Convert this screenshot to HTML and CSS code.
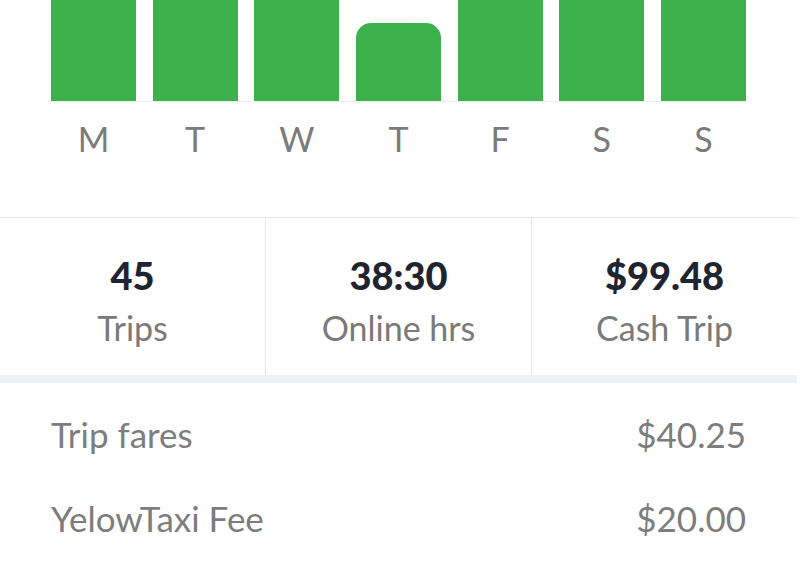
FILE: index.html
```html
<!DOCTYPE html>
<html lang="en">
<head>
  <meta charset="UTF-8" />
  <meta name="viewport" content="width=device-width, initial-scale=1.0"/>
  <title>Weekly Earnings</title>
  <link rel="stylesheet" href="styles.css">
</head>
<body>
  <div class="screen">
    <div class="chart">
      <div class="bars">
        <div class="bar"></div>
        <div class="bar"></div>
        <div class="bar"></div>
        <div class="bar short"></div>
        <div class="bar"></div>
        <div class="bar"></div>
        <div class="bar"></div>
      </div>
      <div class="days">
        <span>M</span>
        <span>T</span>
        <span>W</span>
        <span>T</span>
        <span>F</span>
        <span>S</span>
        <span>S</span>
      </div>
    </div>

    <div class="stats">
      <div class="stat">
        <div class="value">45</div>
        <div class="label">Trips</div>
      </div>
      <div class="stat">
        <div class="value">38:30</div>
        <div class="label">Online hrs</div>
      </div>
      <div class="stat">
        <div class="value">$99.48</div>
        <div class="label">Cash Trip</div>
      </div>
    </div>

    <div class="fares">
      <div class="row">
        <span>Trip fares</span>
        <span>$40.25</span>
      </div>
      <div class="row">
        <span>YelowTaxi Fee</span>
        <span>$20.00</span>
      </div>
    </div>
  </div>
</body>
</html>
```

FILE: styles.css
```css
body {
  margin: 0;
  font-family: 'Lato', 'Open Sans', sans-serif;
  background: #fff;
  color: #7a7a7a;
}

.screen {
  width: 797px;
}

.chart {
  padding: 0 51px;
}

.bars {
  display: flex;
  align-items: flex-end;
  gap: 16.67px;
  height: 101px;
  border-bottom: 1px solid #eeeeee;
}

.bar {
  width: 85px;
  height: 101px;
  background: #3db14b;
}

.bar.short {
  height: 78px;
  border-radius: 15px 15px 0 0;
}

.days {
  display: flex;
  gap: 16.67px;
  margin-top: 16px;
  font-size: 34px;
  line-height: 41px;
  color: #7b7b7b;
}

.days span {
  width: 85px;
  text-align: center;
}

.stats {
  display: flex;
  margin-top: 58px;
  border-top: 1px solid #e6e6e6;
  border-bottom: 8px solid #eff2f5;
}

.stat {
  flex: 1;
  text-align: center;
  padding: 35px 0 27px;
}

.stat + .stat {
  border-left: 1px solid #e8e8e8;
}

.value {
  font-size: 38px;
  line-height: 44px;
  font-weight: 900;
  color: #1f2530;
}

.label {
  margin-top: 10.5px;
  font-size: 34px;
  line-height: 40px;
  color: #7a7a7a;
}

.fares {
  padding-top: 9px;
}

.row {
  display: flex;
  justify-content: space-between;
  padding: 22px 51px;
  font-size: 35px;
  line-height: 40px;
  color: #7d7d7d;
}
```
